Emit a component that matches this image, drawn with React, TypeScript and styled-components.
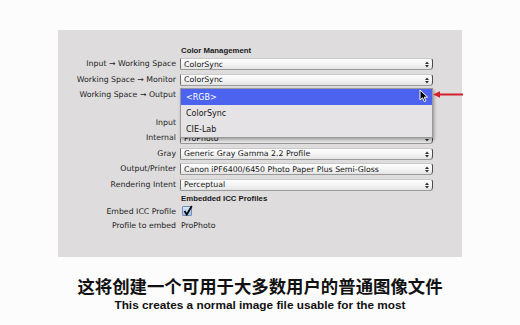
import React from 'react';
import styled, { createGlobalStyle } from 'styled-components';

const GlobalStyle = createGlobalStyle`
  html, body {
    margin: 0;
    padding: 0;
    background: #fcfcfc;
  }
  body {
    width: 520px;
    height: 325px;
    overflow: hidden;
    font-family: "DejaVu Sans", "Noto Sans", sans-serif;
  }
`;

const Page = styled.div`
  position: relative;
  width: 520px;
  height: 325px;
  padding-top: 30px;
  box-sizing: border-box;
`;

const Panel = styled.div`
  margin-left: 58px;
  width: 404px;
  height: 227px;
  background: #dedcdd;
  padding-top: 14px;
  box-sizing: border-box;
  display: flex;
  flex-direction: column;
`;

const Row = styled.div<{ $h: number }>`
  display: grid;
  grid-template-columns: 118px 253px;
  column-gap: 4px;
  align-items: center;
  height: ${({ $h }) => $h}px;
`;

const Label = styled.div`
  text-align: right;
  font-size: 7.8px;
  color: #242424;
  white-space: nowrap;
`;

const Heading = styled.div`
  grid-column: 2;
  padding-left: 1px;
  font-family: "Liberation Sans", Arial, sans-serif;
  font-size: 7.8px;
  font-weight: bold;
  color: #1a1a1a;
  white-space: nowrap;
`;

const Cell = styled.div`
  position: relative;
  align-self: stretch;
  display: flex;
  align-items: center;
`;

const Select = styled.div`
  position: relative;
  flex: 1;
  height: 11px;
  box-sizing: border-box;
  display: flex;
  align-items: center;
  padding-left: 3px;
  font-size: 7.8px;
  color: #151515;
  white-space: nowrap;
  background: linear-gradient(#ffffff, #f3f3f3 55%, #e4e4e4);
  border-top: 1px solid #c9c9c9;
  border-left: 1px solid #6d6d6d;
  border-right: 1px solid #4a4a4a;
  border-radius: 1px 3px 3px 1px;
  box-shadow: 0 1px 0 #9a9a9a;
`;

const Arrows = styled.svg`
  position: absolute;
  right: 3px;
  top: 2px;
`;

const Value = styled.div`
  padding-left: 1px;
  font-size: 7.8px;
  color: #1e1e1e;
  white-space: nowrap;
`;

const Check = styled.div`
  margin-left: 2px;
  width: 10px;
  height: 10px;
  box-sizing: border-box;
  border: 1px solid #6f8db5;
  border-radius: 1px;
  background: linear-gradient(#d6e7fa, #9fc3ee);
  position: relative;
`;

const CheckMark = styled.svg`
  position: absolute;
  left: 0;
  top: -2px;
`;

const Popup = styled.div`
  position: absolute;
  top: 1px;
  left: 0;
  width: 253px;
  height: 50px;
  box-sizing: border-box;
  background: #e5e3e5;
  border: 1px solid #9a9a9a;
  box-shadow: 1px 2px 3px rgba(0, 0, 0, 0.35);
  display: flex;
  flex-direction: column;
  z-index: 2;
`;

const Item = styled.div<{ $active?: boolean }>`
  height: 16px;
  flex: none;
  display: flex;
  align-items: center;
  padding-left: 5px;
  font-size: 8px;
  color: ${({ $active }) => ($active ? '#ffffff' : '#151515')};
  background: ${({ $active }) => ($active ? '#4b63ee' : 'transparent')};
`;

const Cursor = styled.svg`
  position: absolute;
  left: 419px;
  top: 89px;
  z-index: 3;
`;

const RedArrow = styled.svg`
  position: absolute;
  left: 432px;
  top: 90px;
  z-index: 3;
`;

const Subtitles = styled.div`
  margin-top: 18px;
  display: flex;
  flex-direction: column;
  align-items: center;
`;

const Chinese = styled.div`
  font-family: "Noto Sans CJK SC", sans-serif;
  font-weight: 700;
  font-size: 17.4px;
  line-height: 21px;
  color: #111;
`;

const English = styled.div`
  margin-top: 2px;
  font-family: "Liberation Sans", Arial, sans-serif;
  font-weight: 700;
  font-size: 11.8px;
  line-height: 14px;
  color: #111;
`;

const SelectArrows = () => (
  <Arrows width="4" height="7" viewBox="0 0 4 7">
    <path d="M0 3 L2 0.5 L4 3 Z M0 4 L2 6.5 L4 4 Z" fill="#333" />
  </Arrows>
);

const PopButton = ({ value }: { value?: string }) => (
  <Select>
    {value}
    <SelectArrows />
  </Select>
);

interface FieldProps {
  label: string;
  value?: string;
}

const Field = ({ label, value }: FieldProps) => (
  <Row $h={15.5}>
    <Label>{label}</Label>
    <Cell>
      <PopButton value={value} />
    </Cell>
  </Row>
);

export default function App() {
  return (
    <Page>
      <GlobalStyle />
      <Panel>
        <Row $h={12}>
          <Heading>Color Management</Heading>
        </Row>
        <Field label="Input → Working Space" value="ColorSync" />
        <Field label="Working Space → Monitor" value="ColorSync" />
        <Row $h={15.5}>
          <Label>Working Space → Output</Label>
          <Cell>
            <PopButton />
            <Popup>
              <Item $active>&lt;RGB&gt;</Item>
              <Item>ColorSync</Item>
              <Item>CIE-Lab</Item>
            </Popup>
          </Cell>
        </Row>
        {/* section heading row, hidden behind the open menu */}
        <Row $h={12} />
        <Field label="Input" />
        <Field label="Internal" value="ProPhoto" />
        <Field label="Gray" value="Generic Gray Gamma 2.2 Profile" />
        <Field label="Output/Printer" value="Canon iPF6400/6450 Photo Paper Plus Semi-Gloss" />
        <Field label="Rendering Intent" value="Perceptual" />
        <Row $h={12}>
          <Heading>Embedded ICC Profiles</Heading>
        </Row>
        <Row $h={14}>
          <Label>Embed ICC Profile</Label>
          <Cell>
            <Check>
              <CheckMark width="10" height="11" viewBox="0 0 10 11">
                <path d="M1.5 6 L3.8 9.5 L8.8 1" stroke="#0a0a0a" strokeWidth="1.8" fill="none" />
              </CheckMark>
            </Check>
          </Cell>
        </Row>
        <Row $h={15}>
          <Label>Profile to embed</Label>
          <Value>ProPhoto</Value>
        </Row>
      </Panel>
      <Subtitles>
        <Chinese>这将创建一个可用于大多数用户的普通图像文件</Chinese>
        <English>This creates a normal image file usable for the most</English>
      </Subtitles>
      <Cursor width="11" height="14" viewBox="0 0 11 14">
        <path d="M1 1 L1 11 L3.5 8.8 L5.3 12.6 L6.9 11.9 L5.2 8.2 L8.6 8.2 Z" fill="#000" stroke="#fff" strokeWidth="1" strokeLinejoin="round" />
      </Cursor>
      <RedArrow width="32" height="9" viewBox="0 0 32 9">
        <path d="M1 4.5 L8 1.2 L8 7.8 Z" fill="#d4202b" />
        <rect x="7" y="3.5" width="24" height="2" fill="#d4202b" />
      </RedArrow>
    </Page>
  );
}
